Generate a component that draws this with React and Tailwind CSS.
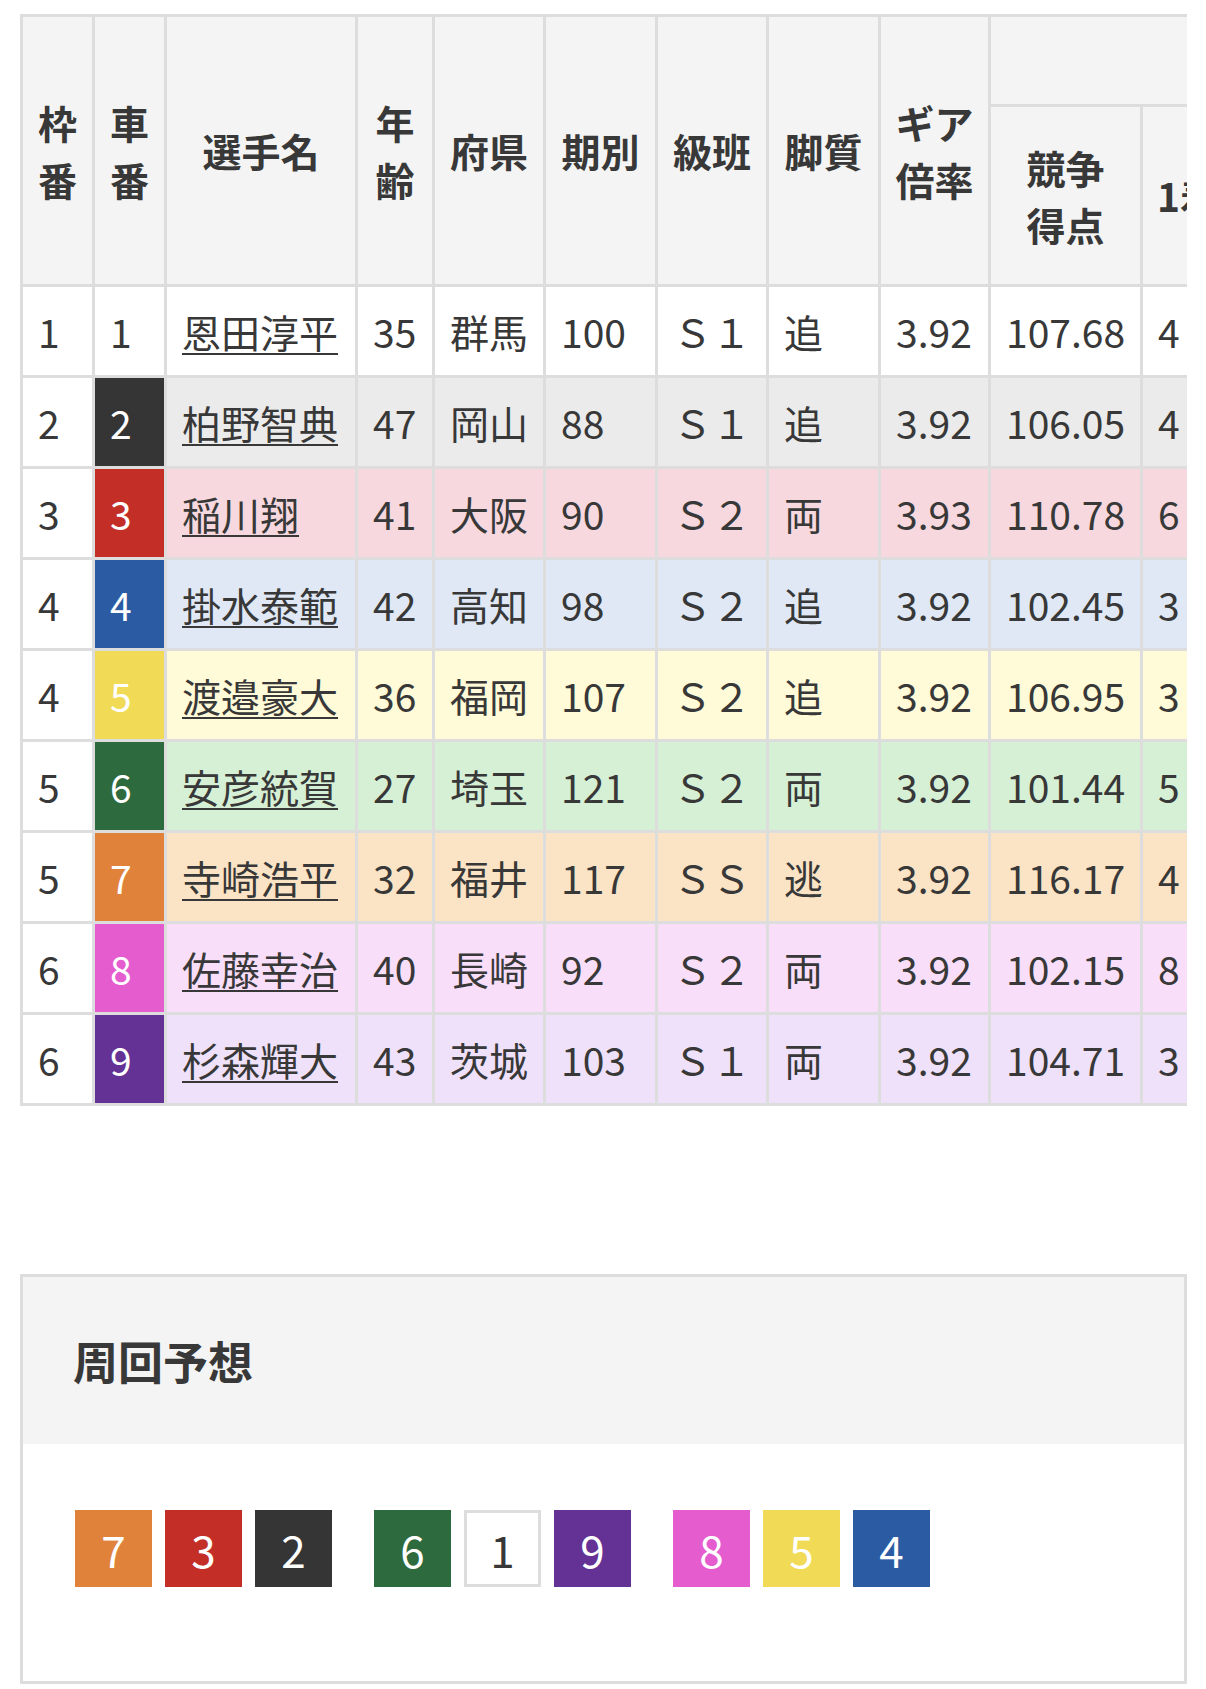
const carColors = {
    1: { cell: "bg-white text-[#383838]", row: "bg-white" },
    2: { cell: "bg-[#353535] text-white", row: "bg-[#ebebeb]" },
    3: { cell: "bg-[#c32f27] text-white", row: "bg-[#f7d8df]" },
    4: { cell: "bg-[#2a5ba3] text-white", row: "bg-[#dfe8f4]" },
    5: { cell: "bg-[#f0da56] text-white", row: "bg-[#fffad7]" },
    6: { cell: "bg-[#2d6a3d] text-white", row: "bg-[#d6f0d5]" },
    7: { cell: "bg-[#e0823a] text-white", row: "bg-[#fbe4c5]" },
    8: { cell: "bg-[#e55ccf] text-white", row: "bg-[#f8def8]" },
    9: { cell: "bg-[#643194] text-white", row: "bg-[#efe1f9]" },
};

const racers = [
    { waku: 1, car: 1, name: "恩田淳平", age: 35, pref: "群馬", ki: 100, kyu: "Ｓ１", leg: "追", gear: "3.92", score: "107.68", rec: [4, 3, 2, 18, "14.8", "25.9", "33.3"] },
    { waku: 2, car: 2, name: "柏野智典", age: 47, pref: "岡山", ki: 88, kyu: "Ｓ１", leg: "追", gear: "3.92", score: "106.05", rec: [4, 2, 5, 17, "14.3", "21.4", "39.2"] },
    { waku: 3, car: 3, name: "稲川翔", age: 41, pref: "大阪", ki: 90, kyu: "Ｓ２", leg: "両", gear: "3.93", score: "110.78", rec: [6, 4, 3, 12, "24.0", "40.0", "52.0"] },
    { waku: 4, car: 4, name: "掛水泰範", age: 42, pref: "高知", ki: 98, kyu: "Ｓ２", leg: "追", gear: "3.92", score: "102.45", rec: [3, 2, 4, 19, "10.7", "17.8", "32.1"] },
    { waku: 4, car: 5, name: "渡邉豪大", age: 36, pref: "福岡", ki: 107, kyu: "Ｓ２", leg: "追", gear: "3.92", score: "106.95", rec: [3, 5, 3, 15, "11.5", "30.7", "42.3"] },
    { waku: 5, car: 6, name: "安彦統賀", age: 27, pref: "埼玉", ki: 121, kyu: "Ｓ２", leg: "両", gear: "3.92", score: "101.44", rec: [5, 3, 1, 16, "20.0", "32.0", "36.0"] },
    { waku: 5, car: 7, name: "寺崎浩平", age: 32, pref: "福井", ki: 117, kyu: "ＳＳ", leg: "逃", gear: "3.92", score: "116.17", rec: [4, 6, 4, 10, "16.6", "41.6", "58.3"] },
    { waku: 6, car: 8, name: "佐藤幸治", age: 40, pref: "長崎", ki: 92, kyu: "Ｓ２", leg: "両", gear: "3.92", score: "102.15", rec: [8, 2, 3, 14, "29.6", "37.0", "48.1"] },
    { waku: 6, car: 9, name: "杉森輝大", age: 43, pref: "茨城", ki: 103, kyu: "Ｓ１", leg: "両", gear: "3.92", score: "104.71", rec: [3, 4, 2, 17, "11.5", "26.9", "34.6"] },
];

const forecast = [[7, 3, 2], [6, 1, 9], [8, 5, 4]];

const colWidths = ["w-[69px]", "w-[69px]", "w-[188px]", "w-[74px]", "w-[108px]", "w-[109px]", "w-[108px]", "w-[109px]", "w-[107px]", "w-[149px]", "w-[90px]", "w-[90px]", "w-[90px]", "w-[90px]", "w-[100px]", "w-[100px]", "w-[100px]"];

const th = "bg-[#f4f4f4] font-bold text-center align-middle px-[8px] leading-[57px]";
const td = "align-middle px-[15px] leading-[57px] whitespace-nowrap";

function Badge({ n }) {
    const c = n === 1 ? "bg-white text-[#383838] border-[3px] border-[#dddddd]" : carColors[n].cell;
    return (
        <div className={`w-[77px] h-[77px] flex items-center justify-center text-[44px] leading-none ${c}`}>
            {n}
        </div>
    );
}

export default function App() {
    return (
        <div className="bg-white text-[#383838] font-['Noto_Sans_CJK_JP','Noto_Sans_CJK_SC',sans-serif] pl-[20px] pt-[14px]">
            {/* Race entry table */}
            <div className="w-[1167px] overflow-hidden">
                <table className="w-[1804px] table-fixed border-separate border-spacing-[3px] bg-[#dddddd] text-[39px]">
                    <colgroup>
                        {colWidths.map((w, i) => (
                            <col key={i} className={w} />
                        ))}
                    </colgroup>
                    <thead>
                        <tr className="h-[87px]">
                            <th rowSpan={2} className={th}>枠<br />番</th>
                            <th rowSpan={2} className={th}>車<br />番</th>
                            <th rowSpan={2} className={th}>選手名</th>
                            <th rowSpan={2} className={th}>年<br />齢</th>
                            <th rowSpan={2} className={th}>府県</th>
                            <th rowSpan={2} className={th}>期別</th>
                            <th rowSpan={2} className={th}>級班</th>
                            <th rowSpan={2} className={th}>脚質</th>
                            <th rowSpan={2} className={th}>ギア<br />倍率</th>
                            <th colSpan={8} className={th}>直近4ヶ月の成績</th>
                        </tr>
                        <tr className="h-[177px]">
                            <th className={th}>競争<br />得点</th>
                            <th className={th}>1着</th>
                            <th className={th}>2着</th>
                            <th className={th}>3着</th>
                            <th className={th}>着外</th>
                            <th className={th}>勝率</th>
                            <th className={th}>2連<br />対率</th>
                            <th className={th}>3連<br />対率</th>
                        </tr>
                    </thead>
                    <tbody>
                        {racers.map((r) => {
                            const col = carColors[r.car];
                            return (
                                <tr key={r.car} className="h-[88px]">
                                    <td className={`${td} bg-white`}>{r.waku}</td>
                                    <td className={`${td} ${col.cell}`}>{r.car}</td>
                                    <td className={`${td} ${col.row}`}>
                                        <a href="#" className="underline decoration-2 underline-offset-[5px]">{r.name}</a>
                                    </td>
                                    <td className={`${td} ${col.row}`}>{r.age}</td>
                                    <td className={`${td} ${col.row}`}>{r.pref}</td>
                                    <td className={`${td} ${col.row}`}>{r.ki}</td>
                                    <td className={`${td} ${col.row}`}>{r.kyu}</td>
                                    <td className={`${td} ${col.row}`}>{r.leg}</td>
                                    <td className={`${td} ${col.row}`}>{r.gear}</td>
                                    <td className={`${td} ${col.row}`}>{r.score}</td>
                                    {r.rec.map((v, i) => (
                                        <td key={i} className={`${td} ${col.row}`}>{v}</td>
                                    ))}
                                </tr>
                            );
                        })}
                    </tbody>
                </table>
            </div>

            {/* Lap forecast */}
            <div className="mt-[168px] w-[1167px] border-[3px] border-[#dddddd]">
                <div className="bg-[#f4f4f4] h-[167px] flex items-center pl-[50px]">
                    <h2 className="text-[45px] font-bold leading-none">周回予想</h2>
                </div>
                <div className="pl-[52px] pt-[66px] pb-[94px] flex gap-[42px]">
                    {forecast.map((group, gi) => (
                        <div key={gi} className="flex gap-[13px]">
                            {group.map((n) => (
                                <Badge key={n} n={n} />
                            ))}
                        </div>
                    ))}
                </div>
            </div>
        </div>
    );
}
